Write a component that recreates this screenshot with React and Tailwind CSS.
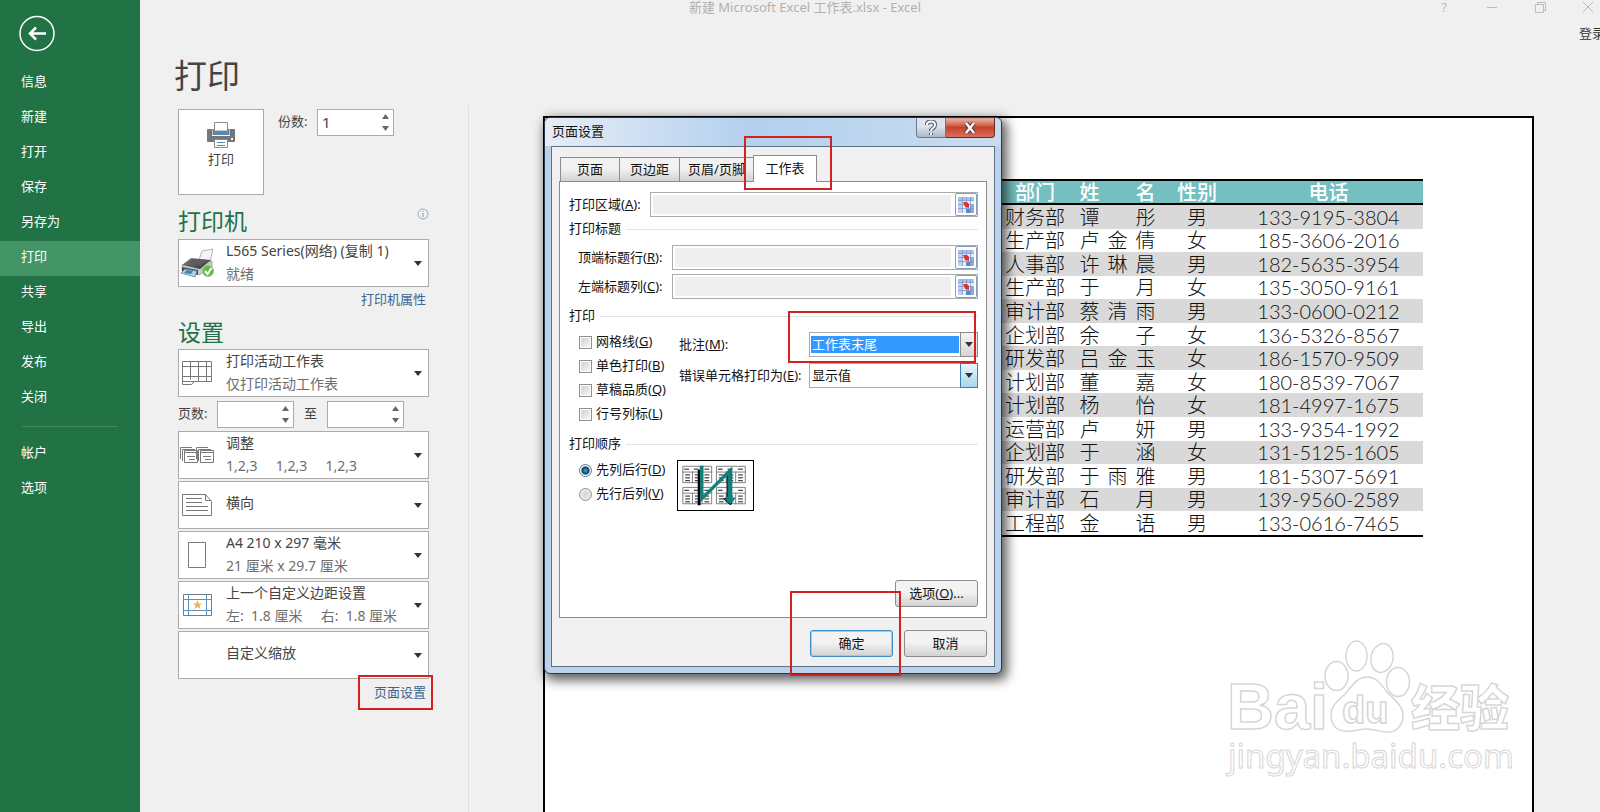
import { useState } from "react";

const NAV_ITEMS = ["信息", "新建", "打开", "保存", "另存为", "打印", "共享", "导出", "发布", "关闭"];
const NAV_FOOTER = ["帐户", "选项"];

const STAFF = [
  ["财务部", "谭彤", "男", "133-9195-3804"],
  ["生产部", "卢金倩", "女", "185-3606-2016"],
  ["人事部", "许琳晨", "男", "182-5635-3954"],
  ["生产部", "于月", "女", "135-3050-9161"],
  ["审计部", "蔡清雨", "男", "133-0600-0212"],
  ["企划部", "余子", "女", "136-5326-8567"],
  ["研发部", "吕金玉", "女", "186-1570-9509"],
  ["计划部", "董嘉", "女", "180-8539-7067"],
  ["计划部", "杨怡", "女", "181-4997-1675"],
  ["运营部", "卢妍", "男", "133-9354-1992"],
  ["企划部", "于涵", "女", "131-5125-1605"],
  ["研发部", "于雨雅", "男", "181-5307-5691"],
  ["审计部", "石月", "男", "139-9560-2589"],
  ["工程部", "金语", "男", "133-0616-7465"],
];

const PRINT_FLAGS = [
  ["网格线", "G"],
  ["单色打印", "B"],
  ["草稿品质", "Q"],
  ["行号列标", "L"],
];

const TABS = [
  ["页面", "w-[59px] ml-px"],
  ["页边距", "w-[60px]"],
  ["页眉/页脚", "w-[74px]"],
  ["工作表", "w-16"],
];

const BTN = "h-[27px] w-[83px] rounded-[3px] border bg-linear-to-b from-[#f3f3f3] from-45% to-[#d2d2d2]";

/* ---------- icons ---------- */

function PrinterIcon() {
  return (
    <svg width="30" height="28" viewBox="0 0 30 28">
      <path d="M2 8h26q1 0 1 1v11q0 1-1 1H2q-1 0-1-1V9q0-1 1-1z" fill="#767676" />
      <rect x="6" y="7" width="18" height="8" fill="#f8f8f8" />
      <rect x="6.500" y="8" width="17" height="6" fill="#5b87ad" />
      <path d="M8.500 1.500h13V10h-13z" fill="#fff" stroke="#8a8a8a" />
      <path d="M8.500 18.500h13v8h-13z" fill="#fff" stroke="#8a8a8a" />
      <path d="M11 21.500h8M11 24.500h8" stroke="#5b87ad" />
      <rect x="25" y="17" width="2" height="2" fill="#fff" />
    </svg>
  );
}

function DevicePrinterIcon() {
  return (
    <svg width="36" height="32" viewBox="0 0 36 32">
      <defs>
        <linearGradient id="lid" x1="0" y1="0" x2="1" y2="1">
          <stop offset="0" stopColor="#8b8b8b" />
          <stop offset="1" stopColor="#2c2c2c" />
        </linearGradient>
      </defs>
      <path d="M20 13 23 4l11-2-3 13z" fill="#f5f5f5" stroke="#b5b5b5" />
      <path d="M3 18v6l17 4 13-8v-6z" fill="#c9c9c9" stroke="#8d8d8d" strokeWidth=".6" />
      <path d="M3 18 12 11l20 2-11 9z" fill="url(#lid)" />
      <path d="M9 16l5-4 14 1-6 5z" fill="#5d5d5d" />
      <path d="M3 20l16 3v5L3 24z" fill="#4c4c4c" />
      <path d="M2 26l4-4 12 2-2 6z" fill="#a9d3ea" stroke="#4d7f9d" strokeWidth=".7" />
      <path d="M5 26l3-3 6 1-2 3z" fill="#3e86ad" />
      <circle cx="29" cy="24" r="5.500" fill="#5fb94f" stroke="#8fc985" />
      <path d="m26 24 2.500 3 4-6" fill="none" stroke="#fff" strokeWidth="2" />
    </svg>
  );
}

function SheetIcon() {
  return (
    <svg width="32" height="28" viewBox="0 0 32 28" fill="none" stroke="#7a7a7a">
      <path d="M1.500 2.500h29v20h-17l-3 3h-9z" />
      <path d="M1.500 7.500h29M1.500 17.500h29M9.500 2.500v18M17.500 2.500v20M25.500 2.500v20M1.500 22.500h12" />
    </svg>
  );
}

function CollateIcon() {
  const stack = (
    <>
      <path d="M.5 12V.5H12M2.500 14V2.500H15" />
      <path d="M4.500 3.500h13v12h-13z" fill="#fff" />
      <path d="M4.500 5.500h13M7 9.500h8M9 12.500h6" />
    </>
  );
  return (
    <svg width="34" height="17" viewBox="0 0 34 17" fill="none" stroke="#7a7a7a">
      {stack}
      <g transform="translate(16 0)">{stack}</g>
    </svg>
  );
}

function LandscapeIcon() {
  return (
    <svg width="32" height="24" viewBox="0 0 32 24" fill="none" stroke="#7a7a7a">
      <path d="M1.500 1.500h23l6 7v14h-29z" />
      <path d="M24.500 1.500v6h6M5 5.500h16M5 9.500h16M5 13.500h22M5 17.500h22" />
    </svg>
  );
}

function PaperIcon() {
  return (
    <svg width="20" height="28" viewBox="0 0 20 28" fill="none" stroke="#7a7a7a">
      <path d="M1.500 1.500h17v25h-17z" />
    </svg>
  );
}

function MarginIcon() {
  return (
    <svg width="30" height="24" viewBox="0 0 30 24" fill="none">
      <path d="M1.500 1.500h28v21h-28z" stroke="#7a7a7a" />
      <path d="M6.500 1.500v21M24.500 1.500v21M1.500 6.500h28M1.500 17.500h28" stroke="#5b93bd" />
      <path d="m15.500 7 1.300 3.400h3.500l-2.800 2.200 1 3.600-3-2.100-3 2.100 1-3.600-2.800-2.200h3.500z" fill="#edb45c" />
    </svg>
  );
}

function RangeIcon() {
  return (
    <svg width="16" height="16" viewBox="0 0 16 16">
      <rect width="16" height="16" fill="#e4edf9" />
      <path d="M0 0h16v3H0z" fill="#a9c1e6" />
      <path d="M0 3h4v13H0z" fill="#bfd1ee" />
      <path d="M12 8h4v8h-4z" fill="#8fabdc" />
      <path d="M8 12h4v4H8z" fill="#5f84c6" />
      <path d="M0 3.500h16M0 7.500h16M0 11.500h16M4.500 0v16M8.500 0v16M12.500 0v16" stroke="#6f8fc8" strokeWidth=".7" />
      <path d="M5 5l4 0 2 2v4l-4-1z" fill="#d9342b" />
    </svg>
  );
}

function MiniTable({ x, y }) {
  return (
    <g transform={`translate(${x} ${y})`}>
      <path d="M.5.5h30v17H.500z" fill="#fff" stroke="#7c7c7c" />
      <path d="M0 6.500h31M10.500 6v12M20.500 6v12" stroke="#7c7c7c" />
      <path d="M2 3.500h5M12 3.500h5M23 3.500h5M3 9.500h5M3 12.500h5M3 15.500h5M13 9.500h5M13 12.500h5M13 15.500h5M23 9.500h5M23 12.500h5M23 15.500h5" stroke="#111" />
    </g>
  );
}

function OrderPreview() {
  return (
    <svg width="77" height="51" viewBox="0 0 77 51" className="border border-black bg-white">
      <MiniTable x={4} y={5} />
      <MiniTable x={39} y={5} />
      <MiniTable x={4} y={27} />
      <MiniTable x={39} y={27} />
      <path d="M20 9h3v37h-3zM50 14h4v24h-4zM46 39l8 7 2-2-6-6z" fill="#000" />
      <path d="M22 5h4v30L52 9l4-3v32h4l-6 7-7-6h4V15L23 43z" fill="#0e817c" />
    </svg>
  );
}

function Caret() {
  return (
    <svg width="8" height="5" viewBox="0 0 8 5" className="shrink-0">
      <path d="M0 0h8L4 5z" fill="#333" />
    </svg>
  );
}

/* ---------- sidebar ---------- */

function NavItem({ label, active }) {
  return (
    <a
      href="#"
      className={`flex h-[35px] items-center pb-[3px] pl-[21px] text-[13px] text-white ${active ? "bg-[#439467]" : ""}`}
    >
      {label}
    </a>
  );
}

function Sidebar() {
  return (
    <nav className="w-[140px] shrink-0 bg-[#217346]">
      <button type="button" aria-label="返回" className="mt-[15px] ml-[18px] block">
        <svg width="38" height="38" viewBox="0 0 38 38" fill="none" stroke="#fff">
          <circle cx="19" cy="18.500" r="17" strokeWidth="1.500" />
          <path d="M28 18.500H12M18 12.500l-6 6 6 6" strokeWidth="2.500" />
        </svg>
      </button>
      <div className="mt-[13px]">
        {NAV_ITEMS.map((label) => (
          <NavItem key={label} label={label} active={label === "打印"} />
        ))}
      </div>
      <hr className="mx-[22px] my-[10px] border-[#3c8a5e]" />
      <div className="mt-2">
        {NAV_FOOTER.map((label) => (
          <NavItem key={label} label={label} />
        ))}
      </div>
    </nav>
  );
}

/* ---------- print settings ---------- */

function SpinBox({ id, value, label }) {
  const [val, setVal] = useState(value);
  const step = (d) => setVal(String(Math.max(1, (Number(val) || 0) + d)));
  return (
    <div className="flex h-[27px] w-[77px] border border-[#ababab] bg-white">
      <input
        id={id}
        aria-label={label}
        value={val}
        onChange={(e) => setVal(e.target.value)}
        className="w-0 flex-1 pl-1 text-[15px] text-[#444] outline-none"
      />
      <div className="flex w-4 flex-col items-center justify-around">
        <button type="button" aria-label="增加" onClick={() => step(1)}>
          <svg width="7" height="5" viewBox="0 0 7 5"><path d="M3.500 0 7 5H0z" fill="#666" /></svg>
        </button>
        <button type="button" aria-label="减少" onClick={() => step(-1)}>
          <svg width="7" height="5" viewBox="0 0 7 5"><path d="M3.500 5 7 0H0z" fill="#666" /></svg>
        </button>
      </div>
    </div>
  );
}

function OptionMenu({ icon, title, detail }) {
  return (
    <button
      type="button"
      aria-haspopup="listbox"
      className="flex h-12 w-full items-center border border-[#ababab] bg-white pr-[6px] text-left text-sm"
    >
      <span className="flex w-9 shrink-0 justify-center">{icon}</span>
      <span className={`ml-[11px] flex-1 whitespace-pre leading-[23px] ${detail ? "pb-[2px]" : "pb-[6px]"}`}>
        <span className="block text-[#444]">{title}</span>
        {detail && <span className="block text-[#6e6e6e]">{detail}</span>}
      </span>
      <Caret />
    </button>
  );
}

function PrintSettings() {
  return (
    <section className="w-[328px] shrink-0 pt-14 pr-[39px] pl-[38px]">
      <h1 className="-ml-1 text-[33px] leading-10 text-[#444]">打印</h1>
      <div className="mt-[13px] flex">
        <button
          type="button"
          className="flex h-[86px] w-[86px] flex-col items-center border border-[#ababab] bg-white pt-[11px] text-[13px] leading-5 text-[#444]"
        >
          <PrinterIcon />
          <span>打印</span>
        </button>
        <label htmlFor="copies" className="ml-[14px] w-[39px] text-[13px] leading-[25px] text-[#444]">份数:</label>
        <SpinBox id="copies" value="1" />
      </div>

      <div className="mt-[10px] flex justify-between">
        <h2 className="text-[23px] leading-8 text-[#217346]">打印机</h2>
        <svg width="12" height="12" viewBox="0 0 12 12" fill="none" stroke="#7d97bd" className="mt-[3px]">
          <circle cx="6" cy="6" r="5" strokeWidth=".8" />
          <path d="M6 5v4M6 3v1" />
        </svg>
      </div>
      <div className="mt-[2px]">
        <OptionMenu icon={<DevicePrinterIcon />} title="L565 Series(网络) (复制 1)" detail="就绪" />
      </div>
      <div className="mt-[2px] flex justify-end pr-[3px]">
        <a href="#" className="text-[13px] leading-5 text-[#3e6691]">打印机属性</a>
      </div>

      <h2 className="mt-[7px] mb-px text-[23px] leading-8 text-[#217346]">设置</h2>
      <OptionMenu icon={<SheetIcon />} title="打印活动工作表" detail="仅打印活动工作表" />
      <div className="mt-1 mb-[3px] flex text-[13px] leading-[25px] text-[#444]">
        <label htmlFor="from" className="w-[39px]">页数:</label>
        <SpinBox id="from" value="" />
        <label htmlFor="to" className="w-[33px] text-center">至</label>
        <SpinBox id="to" value="" />
      </div>
      <div className="flex flex-col gap-[2px]">
        <OptionMenu icon={<CollateIcon />} title="调整" detail={"1,2,3     1,2,3     1,2,3"} />
        <OptionMenu icon={<LandscapeIcon />} title="横向" />
        <OptionMenu icon={<PaperIcon />} title="A4 210 x 297 毫米" detail="21 厘米 x 29.7 厘米" />
        <OptionMenu icon={<MarginIcon />} title="上一个自定义边距设置" detail={"左:  1.8 厘米     右:  1.8 厘米"} />
        <OptionMenu title="自定义缩放" />
      </div>
      <div className="mt-[3px] flex justify-end pr-[3px]">
        <span className="relative">
          <a href="#" className="block text-[13px] leading-5 text-[#3e6691]">页面设置</a>
          <span className="absolute -top-[7px] -right-[7px] -bottom-2 -left-4 border-2 border-[#d32020]" />
        </span>
      </div>
    </section>
  );
}

/* ---------- preview ---------- */

function Spread({ text }) {
  return (
    <div className="mx-auto flex w-[76px] justify-between">
      {[...text].map((ch, i) => (
        <span key={i}>{ch}</span>
      ))}
    </div>
  );
}

function Watermark() {
  return (
    <svg
      width="332"
      height="192"
      viewBox="0 0 332 192"
      fill="#fff"
      stroke="#d6d6d6"
      strokeWidth="1.500"
      className="absolute right-0 bottom-0"
    >
      <text x="27" y="109" fontSize="65" fontWeight="700" fontFamily="Liberation Sans, sans-serif">Bai</text>
      <ellipse cx="136.500" cy="56" rx="11.500" ry="14.500" />
      <ellipse cx="156.500" cy="36" rx="10.500" ry="15" />
      <ellipse cx="182" cy="38" rx="11" ry="14.500" transform="rotate(12 182 38)" />
      <ellipse cx="198" cy="62" rx="11.500" ry="14.500" />
      <path d="M167 57c9 0 14 7 20 15 7 8 16 13 16 23 0 11-7 18-18 17-7-1-12-3-19-3-8 0-13 3-21 2-9 0-14-7-14-16 0-10 8-15 14-21 7-8 12-17 22-17z" />
      <text x="142" y="103" fontSize="38" fontWeight="700" fontFamily="Liberation Sans, sans-serif">du</text>
      <text x="211" y="106" fontSize="49" fontWeight="900" fontFamily="Noto Sans CJK SC, sans-serif">经验</text>
      <text x="28" y="148" fontSize="33" fontFamily="Noto Sans, sans-serif" strokeWidth="1">jingyan.baidu.com</text>
    </svg>
  );
}

function Preview() {
  return (
    <main className="relative mt-[116px] mr-[66px] ml-[74px] flex-1 border-2 border-b-0 border-black bg-white pt-[61px] pr-[109px]">
      <table className="ml-auto h-[358px] w-[428px] border-collapse border-y-2 border-black text-center font-['Lato','Noto_Sans_CJK_SC',sans-serif] text-[20px] leading-[22px] text-[#111]">
        <thead>
          <tr className="border-b-2 border-black bg-[#75bfc0] text-white">
            <th className="w-20 p-0 font-medium">部门</th>
            <th className="w-[85px] p-0 font-medium"><Spread text="姓名" /></th>
            <th className="w-[74px] p-0 font-medium">性别</th>
            <th className="p-0 font-medium">电话</th>
          </tr>
        </thead>
        <tbody className="font-light">
          {STAFF.map(([dept, name, sex, phone]) => (
            <tr key={phone} className="odd:bg-[#d9d9d9]">
              <td className="p-0">{dept}</td>
              <td className="p-0"><Spread text={name} /></td>
              <td className="p-0">{sex}</td>
              <td className="p-0">{phone}</td>
            </tr>
          ))}
        </tbody>
      </table>
      <Watermark />
    </main>
  );
}

/* ---------- page setup dialog ---------- */

function Keyed({ text, k, end = "" }) {
  return <>{text}(<u>{k}</u>){end}</>;
}

function GroupTitle({ children }) {
  return (
    <div className="flex h-5 items-center gap-[5px]">
      <span>{children}</span>
      <span className="h-px flex-1 bg-[#dfe3e8]" />
    </div>
  );
}

function RangeField({ id, text, k, labelClass }) {
  return (
    <div className="flex h-[25px] items-center">
      <label htmlFor={id} className={labelClass}><Keyed text={text} k={k} end=":" /></label>
      <div className="flex h-full flex-1 border border-[#ababab] bg-white">
        <input id={id} className="my-[2px] ml-[2px] w-0 flex-1 bg-[#efefef] outline-none" />
        <button
          type="button"
          aria-label="选择区域"
          className="ml-1 flex w-[22px] items-center justify-center rounded-[2px] border border-[#8a9bb5] bg-white"
        >
          <RangeIcon />
        </button>
      </div>
    </div>
  );
}

function ComboBox({ id, value, selected }) {
  return (
    <div className="flex h-[25px] flex-1 border border-[#ababab] bg-white">
      <select
        id={id}
        defaultValue={value}
        className={`my-[3px] ml-px w-0 flex-1 appearance-none pl-px leading-[17px] outline-none ${
          selected ? "bg-[#3399ff] text-white" : ""
        }`}
      >
        <option>{value}</option>
      </select>
      <span
        className={`-my-px -mr-px ml-px flex w-[18px] items-center justify-center border ${
          selected ? "border-[#8a8a8a] bg-linear-to-b from-[#f4f4f4] to-[#d6d6d6]" : "border-[#3c7fb1] bg-linear-to-b from-[#e9f5fc] to-[#a9d6ef]"
        }`}
      >
        <Caret />
      </span>
    </div>
  );
}

function PageSetupDialog() {
  const [order, setOrder] = useState("D");
  return (
    <div
      role="dialog"
      aria-label="页面设置"
      className="absolute top-[117px] left-[544px] flex h-[557px] w-[458px] flex-col rounded-[6px] border border-[#2b3a4a] bg-[#bad2ec] px-[6px] pb-[6px] text-[13px] text-[#111] shadow-[3px_4px_12px_2px_rgba(0,0,0,0.65)]"
    >
      <div className="-mx-[6px] flex h-7 shrink-0 items-start rounded-t-[5px] bg-linear-to-r from-[#e6edf5] via-[#b3d0ef] via-45% to-[#c9dcee] pr-[6px] pl-[7px]">
        <span className="leading-[26px]">页面设置</span>
        <button
          type="button"
          aria-label="帮助"
          className="ml-auto flex h-5 w-[30px] items-center justify-center rounded-bl-[4px] border border-t-0 border-[#6b7b8c] bg-linear-to-b from-[#dbe4ee] from-45% to-[#a9b8c8]"
        >
          <svg width="12" height="16" viewBox="0 0 12 16" fill="none" strokeLinejoin="round">
            <path d="M2 5q0-3.500 4-3.500T10 5q0 2-2 3.200T6 11M6 13v2" stroke="#4f5a66" strokeWidth="4" />
            <path d="M2 5q0-3.500 4-3.500T10 5q0 2-2 3.200T6 11M6 13v2" stroke="#fff" strokeWidth="2" />
          </svg>
        </button>
        <button
          type="button"
          aria-label="关闭"
          className="flex h-5 w-[49px] items-center justify-center rounded-br-[4px] border border-t-0 border-l-0 border-[#6b2a22] bg-linear-to-b from-[#e3a596] from-10% via-[#c8402a] via-50% to-[#d9705a]"
        >
          <svg width="14" height="12" viewBox="0 0 14 12">
            <path d="m3 1 8 10M11 1 3 11" stroke="#5a3a38" strokeWidth="4.500" />
            <path d="m3 1 8 10M11 1 3 11" stroke="#fff" strokeWidth="2.500" />
          </svg>
        </button>
      </div>

      <div className="flex flex-1 flex-col border border-[#5f7185] bg-[#f0f0f0] pt-2 pr-[7px] pl-[7px]">
        <div role="tablist" className="flex h-[26px] items-end">
          {TABS.map(([tab, width]) =>
            tab === "工作表" ? (
              <button
                key={tab}
                type="button"
                role="tab"
                aria-selected="true"
                className={`relative z-10 -mb-px h-[27px] border border-b-0 border-[#8c8c8c] bg-white ${width}`}
              >
                {tab}
              </button>
            ) : (
              <button
                key={tab}
                type="button"
                role="tab"
                aria-selected="false"
                className={`h-6 border border-r-0 border-b-0 border-[#8c8c8c] bg-linear-to-b from-[#f2f2f2] from-45% to-[#d3d3d3] whitespace-nowrap ${width}`}
              >
                {tab}
              </button>
            )
          )}
        </div>

        <form className="flex h-[437px] flex-col border border-[#8c8c8c] bg-white pt-[10px] pr-2 pb-[10px] pl-[9px]">
          <RangeField id="area" text="打印区域" k="A" labelClass="w-[81px]" />
          <div className="mt-[2px]"><GroupTitle>打印标题</GroupTitle></div>
          <div className="mt-[6px] flex flex-col gap-1">
            <RangeField id="rows" text="顶端标题行" k="R" labelClass="w-[103px] pl-[9px]" />
            <RangeField id="cols" text="左端标题列" k="C" labelClass="w-[103px] pl-[9px]" />
          </div>

          <div className="mt-[7px]"><GroupTitle>打印</GroupTitle></div>
          <div className="mt-1 flex pl-[10px]">
            <div className="w-[100px]">
              {PRINT_FLAGS.map(([text, k]) => (
                <label key={k} className="flex h-6 items-center gap-1 whitespace-nowrap">
                  <input
                    type="checkbox"
                    className="size-[13px] appearance-none border border-[#8f8f8f] bg-linear-to-br from-[#cfcfcf] to-[#f8f8f8] outline-1 -outline-offset-2 outline-white checked:bg-[#4b6fa5]"
                  />
                  <span><Keyed text={text} k={k} /></span>
                </label>
              ))}
            </div>
            <div className="flex flex-1 flex-col gap-[6px] pt-[2px]">
              <div className="flex items-center">
                <label htmlFor="notes" className="w-[130px] whitespace-nowrap"><Keyed text="批注" k="M" end=":" /></label>
                <ComboBox id="notes" value="工作表末尾" selected />
              </div>
              <div className="flex items-center">
                <label htmlFor="errors" className="w-[130px] whitespace-nowrap"><Keyed text="错误单元格打印为" k="E" end=":" /></label>
                <ComboBox id="errors" value="显示值" />
              </div>
            </div>
          </div>

          <div className="mt-2"><GroupTitle>打印顺序</GroupTitle></div>
          <div className="mt-1 flex gap-3 pl-[10px]">
            <div>
              {[["先列后行", "D"], ["先行后列", "V"]].map(([text, k]) => (
                <label key={k} className="flex h-6 items-center gap-1 whitespace-nowrap">
                  <input
                    type="radio"
                    name="order"
                    checked={order === k}
                    onChange={() => setOrder(k)}
                    className="size-[13px] appearance-none rounded-full border border-[#8f8f8f] bg-radial from-[#d2d2d2] to-[#f8f8f8] checked:border-[#5c7b99] checked:from-[#2fa0cf] checked:from-5% checked:via-[#123f63] checked:via-45% checked:to-[#f4f8fb] checked:to-60%"
                  />
                  <span><Keyed text={text} k={k} /></span>
                </label>
              ))}
            </div>
            <div className="pt-[2px]"><OrderPreview /></div>
          </div>

          <button type="button" className={`${BTN} mt-auto self-end border-[#8c8c8c]`}>
            <Keyed text="选项" k="O" end="..." />
          </button>
        </form>

        <div className="mt-3 flex justify-end gap-[11px]">
          <button type="button" className={`${BTN} border-[#3c8fc4] ring-1 ring-[#8fd3f0] ring-inset`}>确定</button>
          <button type="button" className={`${BTN} border-[#8c8c8c]`}>取消</button>
        </div>
      </div>

      {/* callouts for the tutorial steps */}
      <span className="pointer-events-none absolute top-[18px] left-[199px] z-20 h-[54px] w-[88px] border-2 border-[#d32020]" />
      <span className="pointer-events-none absolute top-[193px] left-[243px] z-20 h-[52px] w-[188px] border-2 border-[#d32020]" />
      <span className="pointer-events-none absolute top-[473px] left-[245px] z-20 h-[85px] w-[111px] border-2 border-[#d32020]" />
    </div>
  );
}

/* ---------- window title ---------- */

function TitleBar() {
  return (
    <header className="absolute top-0 right-0 left-[140px] text-[13px]">
      <div className="flex h-[14px] items-center">
        <h2 className="flex-1 pr-[130px] text-center leading-[12px] text-[#b0b0b0]">
          新建 Microsoft Excel 工作表.xlsx - Excel
        </h2>
        <div className="absolute right-[6px] flex items-center gap-9 text-[#bdbdbd]">
          <button type="button" aria-label="帮助" className="w-3 leading-[14px]">?</button>
          <button type="button" aria-label="最小化">
            <svg width="12" height="12" viewBox="0 0 12 12" stroke="currentColor"><path d="M1 6.500h10" /></svg>
          </button>
          <button type="button" aria-label="还原">
            <svg width="12" height="12" viewBox="0 0 12 12" stroke="currentColor" fill="none">
              <path d="M1.500 3.500h8v8h-8zM3.500 3.500v-2h8v8h-2" />
            </svg>
          </button>
          <button type="button" aria-label="关闭窗口">
            <svg width="12" height="12" viewBox="0 0 12 12" stroke="currentColor"><path d="m1 1 10 10M11 1 1 11" /></svg>
          </button>
        </div>
      </div>
      <div className="mt-[9px] flex justify-end overflow-hidden">
        <a href="#" className="-mr-[5px] text-[13px] leading-5 text-[#333]">登录</a>
      </div>
    </header>
  );
}

export default function App() {
  return (
    <div className="relative flex h-screen min-h-[720px] overflow-hidden bg-[#f0f0f0] font-['Noto_Sans','Noto_Sans_CJK_SC',sans-serif]">
      <Sidebar />
      <PrintSettings />
      <div className="mt-[105px] w-px bg-[#dedede]" />
      <Preview />
      <TitleBar />
      <PageSetupDialog />
    </div>
  );
}
